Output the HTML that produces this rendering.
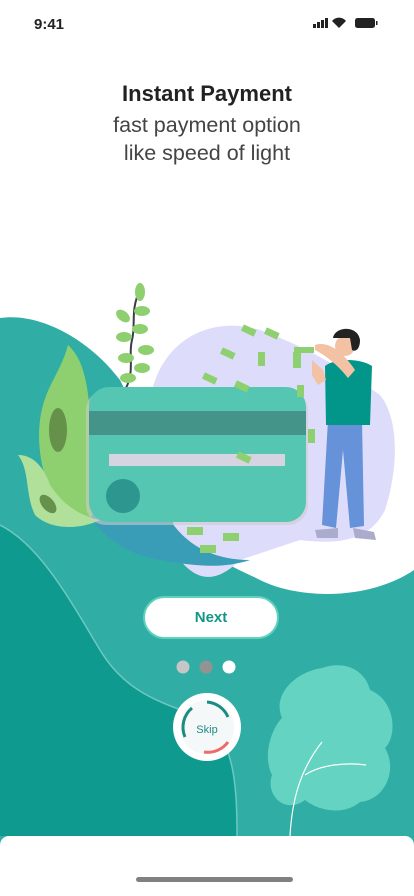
<!DOCTYPE html>
<html><head><meta charset="utf-8"><style>
html,body{margin:0;padding:0;width:414px;height:896px;overflow:hidden;background:#fff;font-family:"Liberation Sans",sans-serif}
.abs{position:absolute}
</style></head><body>
<svg class="abs" style="left:0;top:0" width="414" height="896" viewBox="0 0 414 896">
<path d="M0 318 C40 312 90 340 120 380 L140 420 L180 520 C200 555 230 565 260 580 C300 600 370 600 414 570 L414 896 L0 896 Z" fill="#30ada5"/>
<path d="M0 525 C40 545 70 600 100 650 C130 700 175 705 205 720 C235 740 237 790 237 836 L0 836 Z" fill="#0f9a90"/>
<path d="M0 525 C40 545 70 600 100 650 C130 700 175 705 205 720 C235 740 237 790 237 836" fill="none" stroke="#7fd2c8" stroke-width="1.5" opacity=".8"/>
<path d="M150 400 C160 340 210 315 260 330 C300 345 330 360 380 395 C400 420 398 470 385 510 C370 540 340 545 300 540 L240 560 C220 580 200 585 180 560 Z" fill="#dedcfb"/>
<path d="M80 500 L170 520 C190 550 220 560 250 560 C220 570 190 565 160 560 C130 555 100 540 80 500 Z" fill="#3a9db8"/>
<path d="M68 345 C95 370 85 420 100 470 C100 500 90 530 80 525 C50 510 35 460 40 420 C45 385 60 375 68 345 Z" fill="#8ed06f"/>
<ellipse cx="58" cy="430" rx="9" ry="22" fill="#66914b"/>
<path d="M18 455 C35 455 45 470 50 485 C60 500 75 515 100 520 C80 530 50 530 35 515 C25 495 30 470 18 455 Z" fill="#b1e09a"/>
<ellipse cx="48" cy="504" rx="6" ry="11" fill="#66914b" transform="rotate(-40 48 504)"/>
<path d="M126 388 C135 370 128 355 132 340 C136 325 130 310 140 290" stroke="#3d3d4a" stroke-width="2" fill="none"/>
<g fill="#8ed06f">
<ellipse cx="140" cy="292" rx="5" ry="9"/><ellipse cx="123" cy="316" rx="5" ry="8" transform="rotate(-50 123 316)"/><ellipse cx="142" cy="311" rx="8" ry="5"/>
<ellipse cx="124" cy="337" rx="8" ry="5"/><ellipse cx="140" cy="329" rx="8" ry="5"/><ellipse cx="126" cy="358" rx="8" ry="5"/><ellipse cx="146" cy="350" rx="8" ry="5"/><ellipse cx="128" cy="378" rx="8" ry="5"/><ellipse cx="142" cy="368" rx="8" ry="5"/>
</g>
<rect x="86" y="390" width="222" height="135" rx="20" fill="#ccc" opacity=".6"/>
<rect x="89" y="387" width="217" height="135" rx="20" fill="#54c6b1"/>
<rect x="89" y="411" width="217" height="24" fill="#449489"/>
<rect x="109" y="454" width="176" height="12" fill="#d5d4e0"/>
<circle cx="123" cy="496" r="17" fill="#2c968f"/>
<g fill="#8ed06f">
<rect x="242" y="327" width="14" height="7" transform="rotate(25 249 330)"/><rect x="265" y="330" width="14" height="7" transform="rotate(25 272 333)"/>
<rect x="221" y="350" width="14" height="7" transform="rotate(25 228 353)"/><rect x="258" y="352" width="7" height="14"/>
<rect x="203" y="375" width="14" height="7" transform="rotate(25 210 378)"/><rect x="235" y="383" width="14" height="7" transform="rotate(25 242 386)"/>
<rect x="297" y="385" width="7" height="12"/><rect x="308" y="429" width="7" height="14"/><rect x="237" y="454" width="14" height="7" transform="rotate(25 244 457)"/>
<rect x="187" y="527" width="16" height="8"/><rect x="200" y="545" width="16" height="8"/><rect x="223" y="533" width="16" height="8"/>
<rect x="294" y="347" width="20" height="6"/><rect x="293" y="352" width="8" height="16"/>
</g>
<path d="M328 420 L322 525 L336 528 L343 450 L350 528 L364 526 L362 420 Z" fill="#6592d8"/>
<path d="M325 366 C335 358 360 358 372 366 L370 425 L326 425 Z" fill="#02968a"/>
<path d="M315 530 L338 528 L338 538 L317 538 Z M353 528 L374 532 L376 540 L355 538 Z" fill="#ababcb"/>
<path d="M323 370 L312 360 L312 375 L318 385 L326 380 Z" fill="#f3c2a5"/>
<circle cx="345" cy="346" r="10" fill="#f3c2a5"/>
<path d="M333 338 C335 326 358 325 360 340 C360 350 355 352 352 350 L350 338 Z" fill="#222"/>
<path d="M315 345 C330 340 345 355 355 370 L348 378 C338 365 325 355 315 350 Z" fill="#f3c2a5"/>
<path d="M322 668 C345 660 365 670 370 690 C395 700 398 735 385 748 C398 770 385 800 360 802 C345 815 320 812 305 800 C285 815 265 795 272 775 C262 755 272 728 282 718 C272 695 295 672 322 668 Z" fill="#64d3c1"/>
<path d="M290 836 C292 800 300 770 322 742 M305 775 C320 765 345 762 366 765" stroke="#fff" stroke-width="1.2" fill="none"/>
<circle cx="183" cy="667" r="6.5" fill="#c6c6c6"/><circle cx="206" cy="667" r="6.5" fill="#939393"/><circle cx="229" cy="667" r="6.5" fill="#fff"/>
<circle cx="207" cy="727" r="34" fill="#fff"/>
<circle cx="207" cy="727" r="27" fill="#f4f8f8"/>
<path d="M207 702 A25 25 0 0 1 228 717" stroke="#1e8b83" stroke-width="3" fill="none"/>
<path d="M192 708 A25 25 0 0 0 185 737" stroke="#1e8b83" stroke-width="3" fill="none"/>
<path d="M228 742 A25 25 0 0 1 204 752" stroke="#f06a6a" stroke-width="3" fill="none"/>
<text x="207" y="733" text-anchor="middle" font-family="Liberation Sans" font-size="11" fill="#1e8b83">Skip</text>
<rect x="0" y="836" width="414" height="70" rx="9" fill="#fff"/>
<rect x="136" y="877" width="157" height="5" rx="2.5" fill="#808080"/>
</svg>
<div class="abs" style="left:34px;top:16px;font-size:15px;font-weight:bold;color:#222">9:41</div>
<svg class="abs" style="left:311px;top:17px" width="70" height="14">
<rect x="2" y="7" width="3" height="4" fill="#222"/><rect x="6" y="5" width="3" height="6" fill="#222"/><rect x="10" y="3" width="3" height="8" fill="#222"/><rect x="14" y="1" width="3" height="10" fill="#222"/>
<path d="M21 4 A9 9 0 0 1 35 4 L28 11 Z" fill="#222"/>
<rect x="44" y="1" width="20" height="10" rx="2.5" fill="#222"/><rect x="65" y="4" width="1.5" height="4" fill="#222"/>
</svg>
<div class="abs" style="left:0;width:414px;top:81px;text-align:center;font-size:22px;font-weight:bold;color:#222">Instant Payment</div>
<div class="abs" style="left:0;width:414px;top:111px;text-align:center;font-size:21.5px;color:#444;line-height:28px">fast payment option<br>like speed of light</div>
<div class="abs" style="left:143px;top:596px;width:132px;height:39px;border:2px solid #5ed2bd;border-radius:22px;background:#fff;text-align:center;line-height:39px;font-size:15px;font-weight:bold;color:#13958a">Next</div>
</body></html>
